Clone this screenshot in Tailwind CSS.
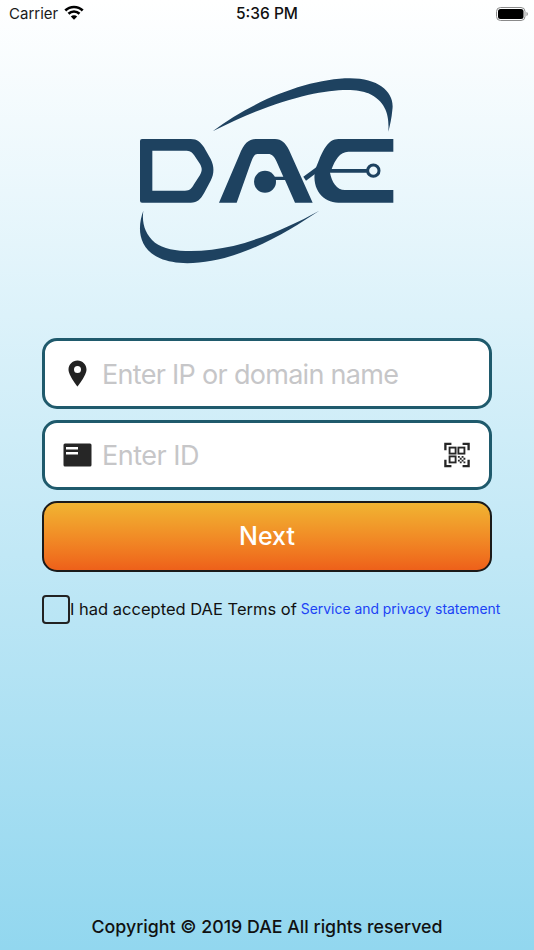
<!DOCTYPE html>
<html lang="en">
<head>
    <meta charset="UTF-8">
    <meta name="viewport" content="width=device-width, initial-scale=1.0">
    <title>DAE</title>
    <script src="https://cdn.jsdelivr.net/npm/@tailwindcss/browser@4"></script>
</head>
<body class="h-[950px] w-[534px] overflow-hidden bg-gradient-to-b from-white to-[#92d7ef] font-['Inter',sans-serif] text-black">
    <div class="flex h-[950px] flex-col">
        <!-- Status bar -->
        <div class="relative flex h-7 items-center justify-between pl-[9px] pr-[6px]">
            <div class="flex items-center gap-[6px]">
                <span class="text-[15px] text-[#1a1a1a]">Carrier</span>
                <svg class="mb-[3px] h-[15px] w-[20px]" viewBox="0 0 20 15" fill="none" stroke="#000" stroke-width="2.700">
                    <path d="M1.300 5.500A12.500 12.500 0 0 1 18.700 5.500"/>
                    <path d="M4.500 8.700A8 8 0 0 1 15.500 8.700"/>
                    <path d="M10 14.800L6.800 11.500A4.500 4.500 0 0 1 13.200 11.500Z" fill="#000" stroke="none"/>
                </svg>
            </div>
            <span class="absolute left-0 right-0 text-center text-[15.500px] font-medium text-[#111]">5:36 PM</span>
            <svg class="h-[14px] w-[32px]" viewBox="0 0 32 14">
                <rect x="0.500" y="0.500" width="28.500" height="13" rx="4" fill="none" stroke="#8a8a8a"/>
                <rect x="2" y="2" width="25.500" height="10" rx="2.500" fill="#000"/>
                <path d="M30.500 5v4c.8-.3 1.300-1.100 1.300-2s-.5-1.700-1.300-2z" fill="#8a8a8a"/>
            </svg>
        </div>

        <!-- Logo -->
        <svg class="ml-[120px] mt-8 h-[220px] w-[300px] shrink-0" viewBox="0 0 900 660" fill="#1e4260">
            <path d="M278 214C400 120 570 55 690 55C780 55 825 100 817 150C815 175 810 195 805 215C808 170 800 125 745 100C690 75 520 90 278 214Z"/>
            <path d="M70 452C52 500 52 565 120 595C180 622 290 610 390 568C470 535 540 490 598 452C520 495 430 535 340 558C250 578 150 582 105 548C75 522 65 490 70 452Z"/>
            <path fill-rule="evenodd" d="M66 237H212C232 237 242 247 252 262L272 297C283 318 283 342 272 362L252 400C242 418 232 428 212 428H66Q60 428 60 422V243Q60 237 66 237ZM97 272V392H195C210 392 215 385 222 373L240 345C247 332 247 325 240 312L222 285C215 275 210 272 195 272Z"/>
            <path d="M297 428L358 285C372 250 385 237 410 237H465C485 237 497 250 507 270L578 428H525L495 360H460V350H490L470 305C462 288 455 282 445 282H412C402 282 398 295 392 310L350 428Z"/>
            <circle cx="435" cy="365" r="33"/>
            <path d="M550 350L598 315V332L558 362Z"/>
            <path d="M820 237H655C625 237 610 270 598 298L585 330C575 390 610 428 655 428H820V390H675C650 390 635 365 630 338H742V327H635C645 300 660 275 685 275H820Z"/>
            <circle cx="760" cy="332" r="17" fill="none" stroke="#1e4260" stroke-width="9"/>
        </svg>

        <!-- Form -->
        <form class="mt-[58px] flex flex-col px-[42px]">
            <div class="flex h-[71px] items-center rounded-[15px] border-[3px] border-[#1f5a6c] bg-white">
                <svg class="ml-[23px] h-[27px] w-[19px] shrink-0" viewBox="0 0 19 27" fill="#222">
                    <path fill-rule="evenodd" d="M9.500 0.500C4.500 0.500 0.500 4.500 0.500 9.500C0.500 15.500 9.500 26.500 9.500 26.500S18.500 15.500 18.500 9.500C18.500 4.500 14.500 0.500 9.500 0.500ZM9.500 6A3.500 3.500 0 1 1 9.500 13A3.500 3.500 0 1 1 9.500 6Z"/>
                </svg>
                <input class="ml-[15px] min-w-0 flex-1 bg-transparent pt-[3px] text-[27px] tracking-[-0.7px] outline-none placeholder:text-[#c6c6c8]" type="text" placeholder="Enter IP or domain name">
            </div>
            <div class="mt-[11px] flex h-[70px] items-center rounded-[15px] border-[3px] border-[#1f5a6c] bg-white">
                <svg class="ml-[18px] h-[24px] w-[29px] shrink-0" viewBox="0 0 29 24" fill="#262626">
                    <path fill-rule="evenodd" d="M2 .5H27a1.500 1.500 0 0 1 1.500 1.500V22a1.500 1.500 0 0 1-1.500 1.500H2A1.500 1.500 0 0 1 .5 22V2A1.500 1.500 0 0 1 2 .5ZM3 4V6.500H15V4ZM3 9V11.500H15V9Z"/>
                </svg>
                <input class="ml-[10px] min-w-0 flex-1 bg-transparent pt-[2px] text-[27px] tracking-[-0.5px] outline-none placeholder:text-[#c6c6c8]" type="text" placeholder="Enter ID">
                <svg class="mr-[19px] h-[26px] w-[26px] shrink-0" viewBox="0 0 28 28" fill="none" stroke="#262626">
                    <path d="M1.500 9V2H8M20 2H26.500V9M1.500 19V26H8M20 26H26.500V19" stroke-width="2.500"/>
                    <rect x="6" y="6" width="6.500" height="6.500" stroke-width="2"/>
                    <rect x="15.500" y="6" width="6.500" height="6.500" stroke-width="2"/>
                    <rect x="6" y="15.500" width="6.500" height="6.500" stroke-width="2"/>
                    <path d="M15 15h2v2h-2zM19 15h2v2h-2zM17 17h2v2h-2zM21 17h2v2h-2zM15 19h2v2h-2zM19 19h2v2h-2zM17 21h2v2h-2zM21 21h2v2h-2z" fill="#262626" stroke="none"/>
                </svg>
            </div>
            <button type="button" class="mt-[11px] h-[71px] rounded-[15px] border-2 border-[#1a1a1a] bg-gradient-to-b from-[#f0b432] to-[#ee601a] text-[25px] font-medium text-white">Next</button>
            <div class="mt-[23px] flex h-[29px] items-center whitespace-nowrap">
                <span class="h-[29px] w-[28px] shrink-0 rounded-[4px] border-2 border-[#222]"></span>
                <span class="text-[16.500px] text-[#111]">I had accepted DAE Terms of</span>
                <a href="#" class="ml-[4px] text-[13.900px] text-[#1c43f5]">Service and privacy statement</a>
            </div>
        </form>

        <!-- Footer -->
        <p class="mt-auto pb-[9px] text-center text-[17.800px] text-[#111] [font-weight:450]">Copyright © 2019 DAE All rights reserved</p>
    </div>
</body>
</html>
